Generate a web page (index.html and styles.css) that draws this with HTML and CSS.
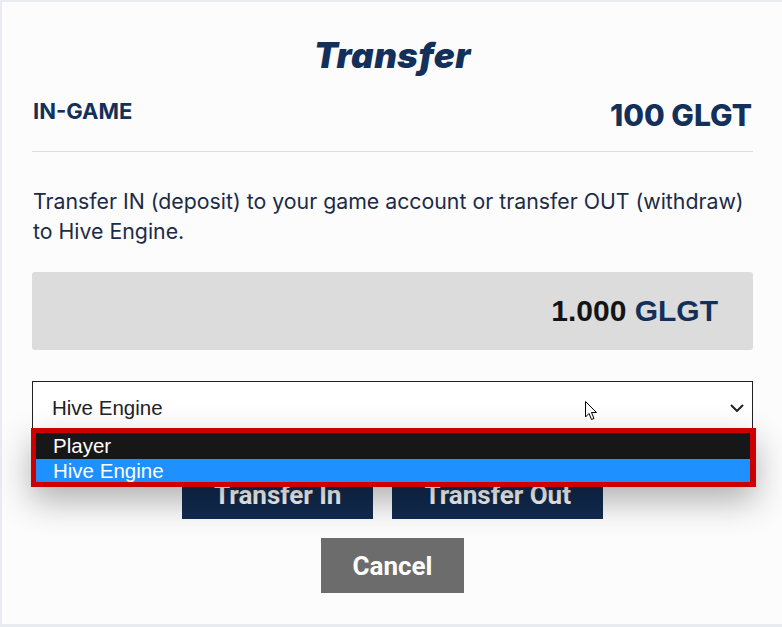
FILE: index.html
```html
<!DOCTYPE html>
<html lang="en">
<head>
    <meta charset="UTF-8">
    <meta name="viewport" content="width=device-width, initial-scale=1.0">
    <title>Transfer</title>
    <link rel="stylesheet" href="styles.css">
</head>
<body>
    <div class="card">
        <h1 class="title">Transfer</h1>
        <div class="balance-row">
            <span class="balance-label">IN-GAME</span>
            <span class="balance-value">100 GLGT</span>
        </div>
        <p class="intro">Transfer IN (deposit) to your game account or transfer OUT (withdraw) to Hive Engine.</p>
        <div class="amount-box">
            <span class="amount">1.000</span>&nbsp;<span class="token">GLGT</span>
        </div>
        <div class="select-wrap">
            <div class="select">
                <span>Hive Engine</span>
                <svg class="chevron" width="14" height="8" viewBox="0 0 14 8">
                    <path d="M1 1 L7 7 L13 1" fill="none" stroke="#222" stroke-width="2"/>
                </svg>
            </div>
            <svg class="pointer" width="13" height="20" viewBox="0 0 13 20">
                <path d="M0.5 0.5 L0.5 16 L4 12.5 L6.5 18.5 L9 17.5 L6.5 11.5 L11.5 11.5 Z" fill="#fff" stroke="#000" stroke-width="1"/>
            </svg>
            <ul class="select-list">
                <li>Player</li>
                <li class="selected">Hive Engine</li>
            </ul>
        </div>
        <div class="actions">
            <button class="btn btn-primary">Transfer In</button>
            <button class="btn btn-primary">Transfer Out</button>
        </div>
        <div class="actions">
            <button class="btn btn-cancel">Cancel</button>
        </div>
    </div>
</body>
</html>
```

FILE: styles.css
```css
body {
    margin: 0;
    padding: 0;
    background-color: #e8ebef;
    font-family: Inter, "Noto Sans", sans-serif;
}

.card {
    margin: 2px 0 0 2px;
    height: 622px;
    box-sizing: border-box;
    padding: 33px 29px 0 30px;
    background-color: #fcfcfc;
    color: #13294b;
}

.title {
    margin: 0;
    text-align: center;
    font-size: 35px;
    line-height: 40px;
    font-weight: 900;
    font-style: italic;
    letter-spacing: 0.5px;
    color: #13305a;
}

.balance-row {
    display: flex;
    justify-content: space-between;
    align-items: flex-start;
    margin-top: 25px;
    padding: 0 1px 21px 1px;
    border-bottom: 1px solid #dcdcdc;
    color: #13305a;
    line-height: 1;
}

.balance-label {
    font-size: 22px;
    font-weight: 700;
}

.balance-value {
    font-size: 30px;
    font-weight: 800;
}

.intro {
    margin: 34px 0 0 1px;
    font-size: 21.3px;
    line-height: 30px;
    color: #1b2b47;
}

.amount-box {
    display: flex;
    justify-content: flex-end;
    align-items: center;
    margin-top: 26px;
    height: 78px;
    padding-right: 35px;
    background-color: #dcdcdc;
    border-radius: 3px;
    font-family: "Liberation Sans", Arial, sans-serif;
    font-size: 30px;
    font-weight: 700;
}

.amount {
    color: #141414;
}

.token {
    color: #13305a;
}

.select-wrap {
    position: relative;
    margin-top: 31px;
}

.select {
    display: flex;
    justify-content: space-between;
    align-items: center;
    height: 54px;
    box-sizing: border-box;
    padding: 0 8px 0 19px;
    border: 1px solid #222;
    background-color: #fff;
    font-family: "Liberation Sans", Arial, sans-serif;
    font-size: 20.5px;
    color: #222;
}

.pointer {
    position: absolute;
    left: 553px;
    top: 20px;
}

.select-list {
    position: absolute;
    left: -1px;
    top: 47px;
    width: 725px;
    box-sizing: border-box;
    margin: 0;
    padding: 0;
    list-style: none;
    border: 5px solid #cc0000;
    border-right-width: 6px;
    box-shadow: 0 14px 34px rgba(0, 0, 0, 0.3);
    font-family: "Liberation Sans", Arial, sans-serif;
    font-size: 20.5px;
    color: #fff;
    z-index: 2;
}

.select-list li {
    padding-left: 17px;
    height: 26px;
    line-height: 26px;
    background-color: #171717;
}

.select-list li.selected {
    height: 23px;
    line-height: 23px;
    background-color: #1e90ff;
}

.actions {
    display: flex;
    justify-content: center;
    gap: 19px;
    margin-top: 36px;
}

.actions + .actions {
    margin-top: 19px;
}

.btn {
    border: none;
    padding: 0 32px;
    font-family: Roboto, "Liberation Sans", sans-serif;
    font-size: 26px;
    font-weight: 700;
    color: #fff;
    cursor: pointer;
}

.btn-primary {
    height: 48px;
    background-color: #122b4f;
}

.btn-cancel {
    height: 55px;
    padding: 0 32px;
    background-color: #6c6c6c;
}
```
